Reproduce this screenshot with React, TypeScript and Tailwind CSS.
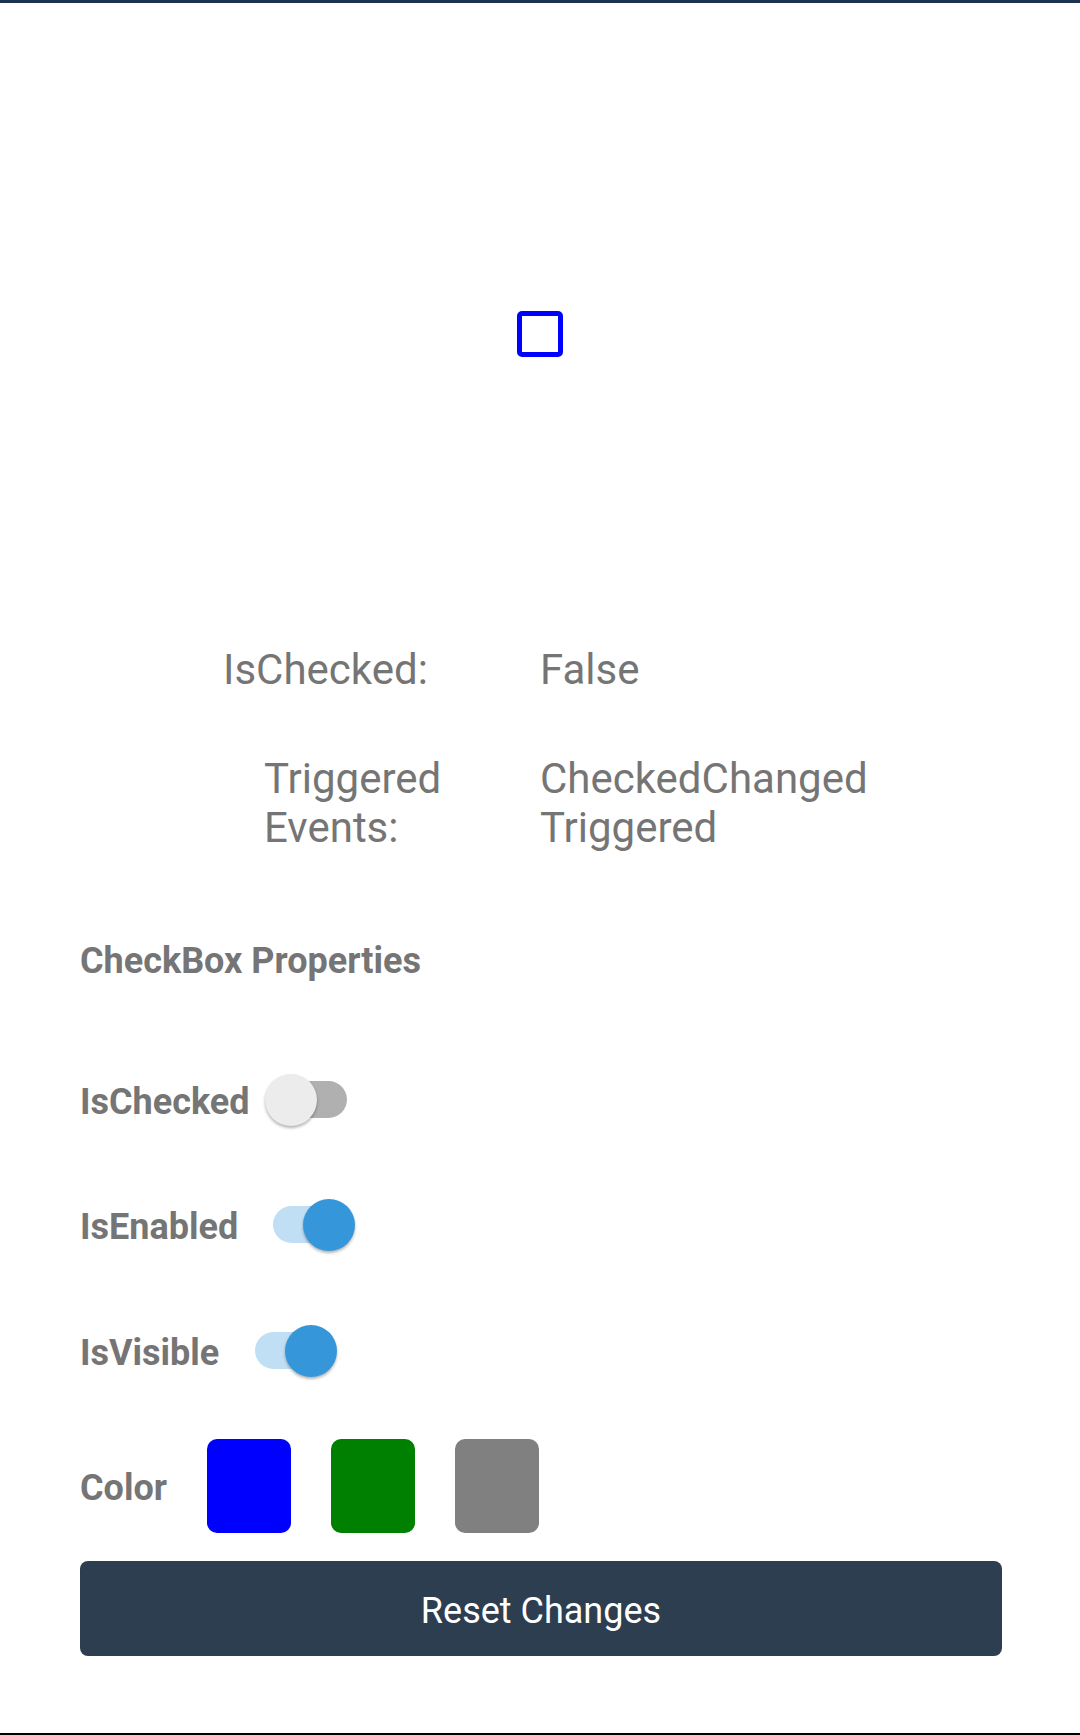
import React from "react";

function Toggle({ on }: { on: boolean }) {
  return (
    <div className="relative w-[102px] h-[56px] shrink-0">
      <div
        className={
          "absolute left-[20px] top-[9px] w-[62px] h-[37px] rounded-full " +
          (on ? "bg-[#c0dff4]" : "bg-[#b0b0b0]")
        }
      />
      <div
        className={
          "absolute top-[2px] w-[52px] h-[52px] rounded-full shadow-[0_2px_3px_rgba(0,0,0,0.3)] " +
          (on ? "left-[50px] bg-[#3597da]" : "left-0 bg-[#ececec]")
        }
      />
    </div>
  );
}

export default function App() {
  const font = { fontFamily: "Roboto, 'Noto Sans', sans-serif" };
  return (
    <div className="w-[1080px] h-[1735px] bg-white flex flex-col overflow-hidden" style={font}>
      <div className="h-[3px] bg-[#1c3450] shrink-0" />

      <div className="mt-[308px] flex justify-center">
        <div className="w-[46px] h-[46px] border-[5px] border-[#0000ff] rounded-[5px]" />
      </div>

      <div className="mt-[288px] flex text-[42px] leading-[49px] text-[#757575]">
        <div className="w-[540px] shrink-0 pl-[223px]">IsChecked:</div>
        <div className="w-[400px]">False</div>
      </div>

      <div className="mt-[60px] flex text-[42px] leading-[49px] text-[#757575]">
        <div className="w-[540px] shrink-0 pl-[264px]">
          <div className="w-[190px]">Triggered Events:</div>
        </div>
        <div className="w-[400px]">CheckedChanged Triggered</div>
      </div>

      <div className="pl-[80px] pr-[78px] flex flex-col">
        <div className="mt-[88px] text-[36px] leading-[42px] font-bold text-[#757575]">
          CheckBox Properties
        </div>

        <div className="mt-[90px] h-[56px] flex items-center gap-[15px]">
          <span className="pt-[4px] text-[36px] leading-[42px] font-bold text-[#757575]">IsChecked</span>
          <Toggle on={false} />
        </div>

        <div className="mt-[69px] h-[56px] flex items-center gap-[15px]">
          <span className="pt-[4px] text-[36px] leading-[42px] font-bold text-[#757575]">IsEnabled</span>
          <Toggle on={true} />
        </div>

        <div className="mt-[70px] h-[56px] flex items-center gap-[16px]">
          <span className="pt-[4px] text-[36px] leading-[42px] font-bold text-[#757575]">IsVisible</span>
          <Toggle on={true} />
        </div>

        <div className="mt-[60px] h-[94px] flex items-center gap-[40px]">
          <span className="pt-[4px] text-[36px] leading-[42px] font-bold text-[#757575]">Color</span>
          <div className="w-[84px] h-[94px] rounded-[10px] bg-[#0000ff]" />
          <div className="w-[84px] h-[94px] rounded-[10px] bg-[#008000]" />
          <div className="w-[84px] h-[94px] rounded-[10px] bg-[#808080]" />
        </div>

        <button className="mt-[28px] w-[922px] h-[95px] rounded-[8px] bg-[#2d3e50] text-white text-[36px] leading-[42px] flex items-center justify-center">
          <span className="pt-[4px]">Reset Changes</span>
        </button>
      </div>

      <div className="mt-auto h-[2px] bg-black shrink-0" />
    </div>
  );
}
